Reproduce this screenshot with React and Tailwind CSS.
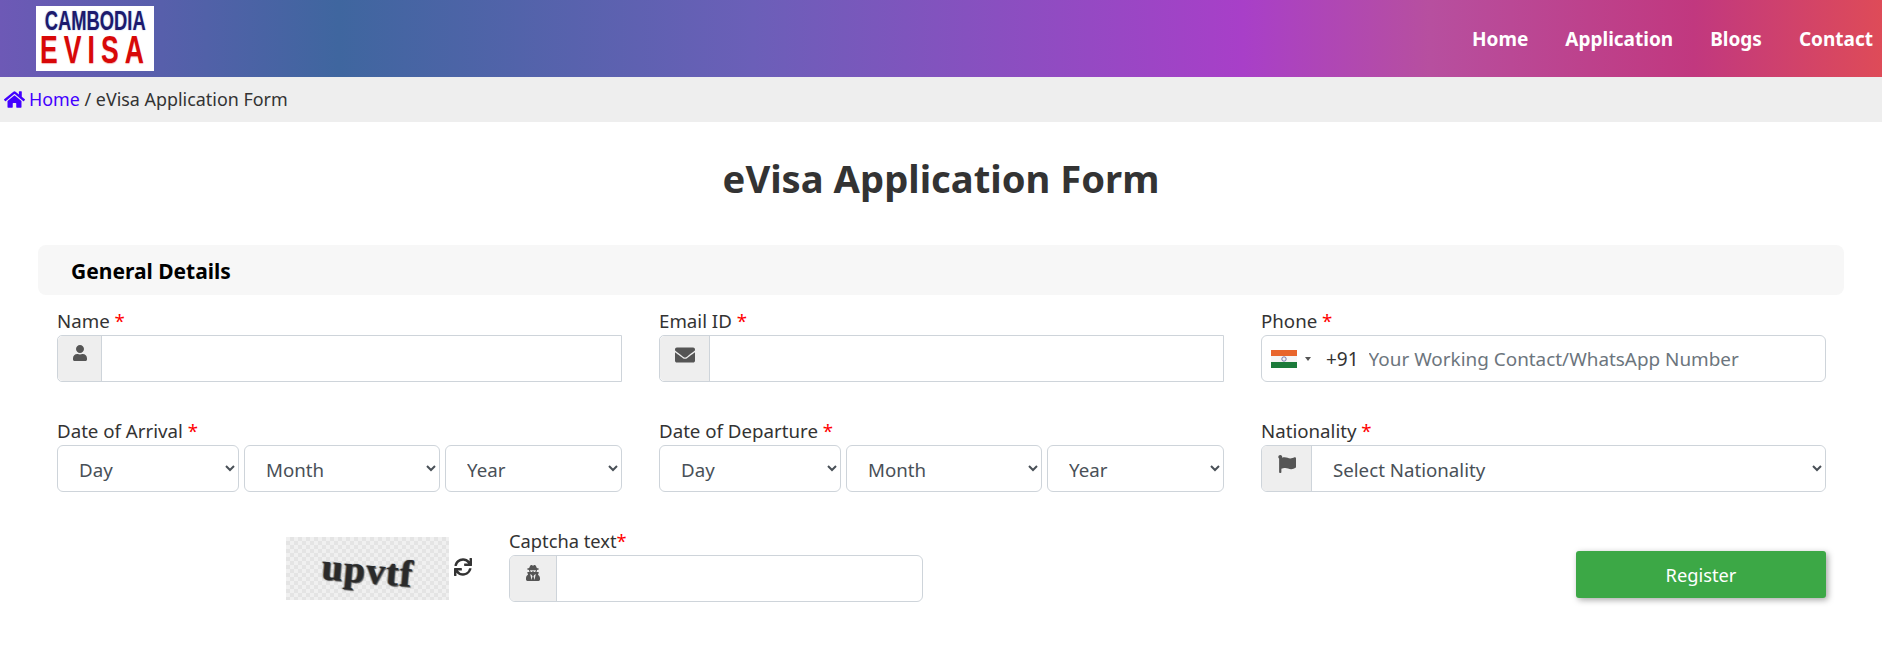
import React from "react";
import { FaHome, FaUser, FaEnvelope, FaFlag, FaUserSecret, FaSync } from "react-icons/fa";

const font = "font-['Noto_Sans',sans-serif]";

const Req = () => <span className="text-[#ff0000]"> *</span>;

const Label = ({ children }) => (
  <label className="block h-[22px] text-[18.7px] leading-[22px] text-[#333]">
    {children}
    <Req />
  </label>
);

const Addon = ({ icon: Icon, width, size = 16, rounded = "rounded-l-[5px]" }) => (
  <div
    className={`flex justify-center pt-[9px] shrink-0 h-full bg-[#eee] border-r border-[#ced4da] text-[#555] ${width} ${rounded}`}
  >
    <Icon size={size} />
  </div>
);

const DateSelect = ({ label, width }) => (
  <select className={`h-[47px] rounded-[6px] border border-[#ced4da] bg-white pl-[17px] pt-[1px] text-[18.7px] text-[#495057] ${width}`}>
    <option>{label}</option>
  </select>
);

const DateGroup = ({ title }) => (
  <div className="w-[565px]">
    <Label>{title}</Label>
    <div className="mt-[3px] flex justify-between">
      <DateSelect label="Day" width="w-[182px]" />
      <DateSelect label="Month" width="w-[196px]" />
      <DateSelect label="Year" width="w-[177px]" />
    </div>
  </div>
);

const IndiaFlag = () => (
  <svg width="26" height="18" viewBox="0 0 26 18">
    <rect width="26" height="6" fill="#e8652c" />
    <rect y="6" width="26" height="6" fill="#f5f5f5" />
    <rect y="12" width="26" height="6" fill="#1c7a3a" />
    <circle cx="13" cy="9" r="2.2" fill="none" stroke="#5a5a9a" strokeWidth="0.8" />
  </svg>
);

const App = () => {
  return (
    <div className={`${font} min-h-[660px] bg-white`}>
      {/* Header */}
      <header className="flex h-[77px] items-center justify-between bg-[linear-gradient(90deg,#6d59b6_0%,#3f669f_18%,#6b5fb8_40%,#a83fc8_66%,#b74f9f_76%,#c1387f_90%,#de4b58_100%)] pl-[36px] pr-[9px]">
        <div className="flex h-[65px] w-[118px] flex-col items-center justify-center overflow-hidden bg-white font-['Liberation_Sans',sans-serif] font-bold leading-none">
          <span className="scale-x-[0.68] text-[27px] leading-[23px] text-[#1c1a6e] [text-shadow:0_0_2px_#9fb4dc]">CAMBODIA</span>
          <span className="scale-x-[0.68] text-[39px] leading-[34px] tracking-[9px] text-[#d80808] [text-shadow:0_1px_1px_#f5b5b5]">EVISA</span>
        </div>
        <nav className="flex gap-[37px] pt-[1px] text-[19px] font-bold text-white">
          <a>Home</a>
          <a>Application</a>
          <a>Blogs</a>
          <a>Contact</a>
        </nav>
      </header>

      {/* Breadcrumb */}
      <div className="flex h-[45px] items-center bg-[#eee] pl-[4px] text-[17.9px] text-[#333]">
        <FaHome size={21} className="mr-[4px] text-[#4200ff]" />
        <a className="text-[#4200ff]">Home</a>
        <span>&nbsp;/ eVisa Application Form</span>
      </div>

      {/* Title */}
      <h1 className="mt-[30px] text-center text-[38.2px] font-bold leading-[52px] text-[#333]">eVisa Application Form</h1>

      {/* Form */}
      <div className="mx-[38px] mt-[41px]">
        <div className="flex h-[50px] items-center rounded-[8px] bg-[#f7f7f7] pl-[33px] pt-[4px] text-[21px] font-bold text-black">
          General Details
        </div>

        <div className="mt-[15px] flex justify-between pl-[19px] pr-[18px]">
          <div className="w-[565px]">
            <Label>Name</Label>
            <div className="mt-[3px] flex h-[47px] items-center rounded-l-[5px] border border-[#ced4da]">
              <Addon icon={FaUser} width="w-[44px]" />
              <input className="h-full flex-1" />
            </div>
          </div>
          <div className="w-[565px]">
            <Label>Email ID</Label>
            <div className="mt-[3px] flex h-[47px] items-center rounded-l-[5px] border border-[#ced4da]">
              <Addon icon={FaEnvelope} width="w-[50px]" size={20} />
              <input className="h-full flex-1" />
            </div>
          </div>
          <div className="w-[565px]">
            <Label>Phone</Label>
            <div className="mt-[3px] flex h-[47px] items-center rounded-[6px] border border-[#ced4da] pl-[9px]">
              <IndiaFlag />
              <span className="ml-[8px] mr-[15px] h-0 w-0 border-x-[3px] border-t-[4px] border-x-transparent border-t-[#555]" />
              <span className="pt-[1px] text-[19px] text-[#333]">+91</span>
              <input
                className="ml-[10px] min-w-0 flex-1 pt-[2px] text-[18.9px] outline-none placeholder:text-[#6c757d]"
                placeholder="Your Working Contact/WhatsApp Number"
              />
            </div>
          </div>
        </div>

        <div className="mt-[38px] flex justify-between pl-[19px] pr-[18px]">
          <DateGroup title="Date of Arrival" />
          <DateGroup title="Date of Departure" />
          <div className="w-[565px]">
            <Label>Nationality</Label>
            <div className="mt-[3px] flex h-[47px] items-center rounded-[6px] border border-[#ced4da]">
              <Addon icon={FaFlag} width="w-[50px]" size={18} />
              <select className="h-full flex-1 rounded-r-[6px] bg-white pl-[17px] pt-[1px] text-[18.7px] text-[#495057]">
                <option>Select Nationality</option>
              </select>
            </div>
          </div>
        </div>

        <div className="mt-[38px] flex items-end pl-[19px] pr-[18px]">
          {/* Captcha */}
          <div className="mb-[2px] ml-[229px] flex h-[63px] w-[163px] shrink-0 items-center justify-center bg-[#e8e8e8] bg-[repeating-conic-gradient(#e4e4e4_0%_25%,#f0f0f0_0%_50%)] bg-size-[8px_8px]">
            <span className="translate-y-[1px] rotate-[5deg] font-['Liberation_Serif',serif] text-[38px] font-bold leading-none tracking-[1px] text-[#2a2a2a] [text-shadow:1px_1px_1px_#555,-1px_0_1px_#777]">
              upvtf
            </span>
          </div>
          <FaSync size={18} className="mb-[26px] ml-[5px] shrink-0 text-[#333]" />
          <div className="ml-[37px] w-[414px] shrink-0">
            <label className="block h-[22px] text-[18.3px] leading-[22px] text-[#333]">
              Captcha text<span className="text-[#ff0000]">*</span>
            </label>
            <div className="mt-[3px] flex h-[47px] items-center rounded-[6px] border border-[#ced4da]">
              <Addon icon={FaUserSecret} width="w-[47px]" size={16} />
              <input className="h-full flex-1" />
            </div>
          </div>
          <button className="mb-[4px] ml-auto h-[47px] w-[250px] rounded-[3px] bg-[#3ca846] text-[18.3px] text-white shadow-[2px_2px_6px_rgba(0,0,0,0.35)]">
            Register
          </button>
        </div>
      </div>
    </div>
  );
};

export default App;
